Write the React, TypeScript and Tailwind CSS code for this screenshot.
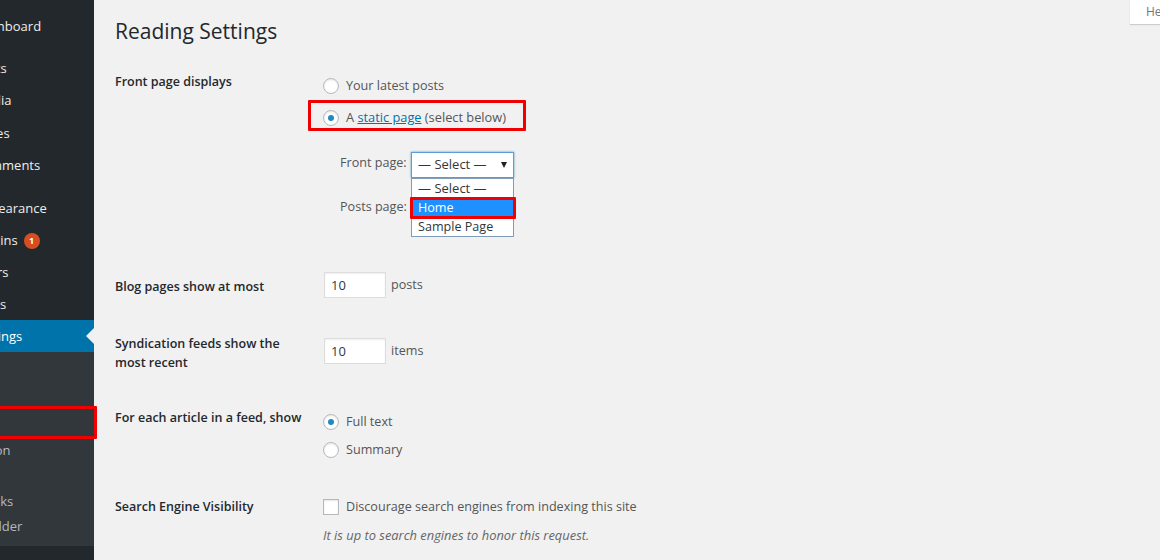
const FONT = "font-['Open_Sans',sans-serif]";

const Radio = ({ checked = false }: { checked?: boolean }) => (
  <span className="flex h-4 w-4 shrink-0 items-center justify-center rounded-full border border-[#b4b9be] bg-white shadow-[inset_0_1px_2px_rgba(0,0,0,0.1)]">
    {checked && <span className="h-[6px] w-[6px] rounded-full bg-[#1e8cbe]" />}
  </span>
);

const RedBox = ({ className }: { className: string }) => (
  <span className={`pointer-events-none absolute rounded-[1px] border-[3px] border-[#f00000] ${className}`} />
);

const MenuItem = ({ label, badge, active }: { label: string; badge?: string; active?: boolean }) => (
  <div className={`relative flex h-8 items-center pt-[2px] pl-[70px] whitespace-nowrap ${active ? 'bg-[#0073aa] text-white' : 'text-[#eeeeee]'}`}>
    {label}
    {badge && (
      <span className="ml-[6px] flex h-4 w-4 items-center justify-center rounded-full bg-[#d54e21] text-[9px] font-bold text-white">
        {badge}
      </span>
    )}
    {active && (
      <span className="absolute top-[8px] right-0 h-0 w-0 border-y-[8px] border-r-[8px] border-y-transparent border-r-[#f1f1f1]" />
    )}
  </div>
);

const SubItem = ({ label, marked }: { label: string; marked?: boolean }) => (
  <div className="relative flex h-[25.5px] items-center pl-[42px] whitespace-nowrap text-[#b4b9be]">
    {marked ? <span className="text-white">{label}</span> : label}
    {marked && <RedBox className="-top-[6px] left-0 -right-[3px] h-[33px]" />}
  </div>
);

const Sidebar = () => (
  <aside className="h-full w-[94px] shrink-0 bg-[#23282d] text-[13px]">
    <div className="ml-[-96px] w-[190px] pt-[10px]">
      <MenuItem label="Dashboard" />
      <div className="mt-[10px]">
        <MenuItem label="Posts" />
        <MenuItem label="Media" />
        <div className="mt-px">
          <MenuItem label="Pages" />
        </div>
        <MenuItem label="Comments" />
      </div>
      <div className="mt-[11px]">
        <MenuItem label="Appearance" />
        <MenuItem label="Plugins" badge="1" />
        <MenuItem label="Users" />
        <MenuItem label="Tools" />
        <MenuItem label="Settings" active />
      </div>
      <div className="bg-[#32373c] pt-[9px] pb-[6px]">
        <SubItem label="General" />
        <SubItem label="Writing" />
        <SubItem label="Reading" marked />
        <SubItem label="Discussion" />
        <SubItem label="Media" />
        <SubItem label="Permalinks" />
        <SubItem label="Page Builder" />
      </div>
    </div>
  </aside>
);

const NumberField = ({ unit }: { unit: string }) => (
  <div className="flex h-[26px] items-center pl-px">
    <input
      readOnly
      value="10"
      className="h-[26px] w-[62px] border border-[#dddddd] bg-white pl-[6px] text-[13px] text-[#32373c] shadow-[inset_0_1px_2px_rgba(0,0,0,0.07)] outline-none"
    />
    <span className="ml-[5px]">{unit}</span>
  </div>
);

const Label = ({ children }: { children: React.ReactNode }) => (
  <div className="w-[208px] shrink-0 text-[12.5px] leading-[19px] font-semibold whitespace-nowrap text-[#23282d]">{children}</div>
);

const FrontPageOptions = () => (
  <div>
    <div className="mt-[6px] flex h-5 items-center gap-[7px]">
      <Radio />
      Your latest posts
    </div>
    <div className="relative mt-3 flex h-5 items-center gap-[7px] text-[12.8px]">
      <RedBox className="top-[-8px] left-[-15px] h-[31px] w-[218px]" />
      <Radio checked />
      <span>
        A <span className="text-[#0073aa] underline">static page</span> (select below)
      </span>
    </div>
    <div className="relative mt-[24px] flex h-[26px] items-center pl-[17px]">
      <span className="w-[71px] -translate-y-[2px]">Front page:</span>
      <div className="flex h-[26px] w-[103px] items-center justify-between border border-[#5b9dd9] bg-white pr-[6px] pl-[6px] text-[13px] text-[#32373c] shadow-[0_0_2px_rgba(30,140,190,0.8)]">
        — Select —
        <span className="h-0 w-0 border-x-[3.5px] border-t-[6px] border-x-transparent border-t-[#222222]" />
      </div>
      <div className="absolute top-[26px] left-[88px] w-[103px] border border-[#7f9db9] bg-white leading-[19px] text-[#32373c]">
        <div className="pl-[6px] text-[13px]">— Select —</div>
        <div className="relative bg-[#1e90ff] pl-[6px] text-white">
          Home
          <RedBox className="-top-px -left-[2px] -right-[3px] h-[22px]" />
        </div>
        <div className="pl-[6px]">Sample Page</div>
      </div>
    </div>
    <div className="mt-[19px] flex h-5 items-center pl-[17px]">Posts page:</div>
  </div>
);

const App = () => (
  <div className={`flex h-[560px] w-[1160px] overflow-hidden bg-[#f1f1f1] ${FONT}`}>
    <Sidebar />
    <main className="relative min-w-0 flex-1 pl-[21px] text-[12.6px] text-[#555555]">
      <div className="absolute top-0 right-0 h-6 w-[30px] overflow-hidden bg-white pt-[3px] pl-4 text-[12px] whitespace-nowrap text-[#72777c] shadow-[0_1px_1px_rgba(0,0,0,0.15)]">
        Help
      </div>
      <h1 className="pt-[16px] text-[21px] leading-[30px] font-normal text-[#23282d]">Reading Settings</h1>

      <section className="mt-[24px] flex h-[202px]">
        <Label>
          <div className="pt-[2px]">Front page displays</div>
        </Label>
        <FrontPageOptions />
      </section>

      <section className="flex h-[66px]">
        <Label>
          <div className="pt-[5px]">Blog pages show at most</div>
        </Label>
        <NumberField unit="posts" />
      </section>

      <section className="flex h-[69px]">
        <Label>
          <div className="-mt-[4px]">
            Syndication feeds show the
            <br />
            most recent
          </div>
        </Label>
        <NumberField unit="items" />
      </section>

      <section className="flex h-[90px]">
        <Label>
          <div className="pt-px">For each article in a feed, show</div>
        </Label>
        <div>
          <div className="mt-[5px] flex h-5 items-center gap-[7px]">
            <Radio checked />
            Full text
          </div>
          <div className="mt-[8px] flex h-5 items-center gap-[7px]">
            <Radio />
            Summary
          </div>
        </div>
      </section>

      <section className="flex">
        <Label>Search Engine Visibility</Label>
        <div>
          <div className="flex h-5 items-center gap-[7px]">
            <span className="h-4 w-4 border border-[#b4b9be] bg-white shadow-[inset_0_1px_2px_rgba(0,0,0,0.1)]" />
            Discourage search engines from indexing this site
          </div>
          <p className="mt-[9px] text-[12.9px] text-[#666666] italic">It is up to search engines to honor this request.</p>
        </div>
      </section>
    </main>
  </div>
);

export default App;
